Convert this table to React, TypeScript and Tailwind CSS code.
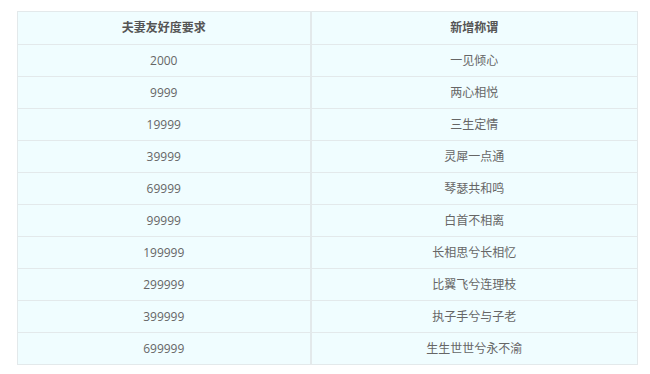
const rows = [
  ['2000', '一见倾心'],
  ['9999', '两心相悦'],
  ['19999', '三生定情'],
  ['39999', '灵犀一点通'],
  ['69999', '琴瑟共和鸣'],
  ['99999', '白首不相离'],
  ['199999', '长相思兮长相忆'],
  ['299999', '比翼飞兮连理枝'],
  ['399999', '执子手兮与子老'],
  ['699999', '生生世世兮永不渝'],
]

export default function App() {
  return (
    <div className="w-[650px] h-[374px] bg-white pl-[17px] pt-[11px] font-['Open_Sans','Noto_Sans_CJK_SC',sans-serif] text-[12px]">
      <table className="w-[621px] border-collapse bg-[#f0fdff] border border-[#e3e9eb]">
        <thead>
          <tr className="h-[33px]">
            <th className="w-[293px] border-r-2 border-b border-[#e3e9eb] font-bold text-[#555]">夫妻友好度要求</th>
            <th className="border-b border-[#e3e9eb] font-bold text-[#555]">新增称谓</th>
          </tr>
        </thead>
        <tbody>
          {rows.map(([need, title]) => (
            <tr key={need} className="h-[32px]">
              <td className="border-r-2 border-b border-[#e3e9eb] text-center text-[#666]">{need}</td>
              <td className="border-b border-[#e3e9eb] text-center text-[#666]">{title}</td>
            </tr>
          ))}
        </tbody>
      </table>
    </div>
  )
}
